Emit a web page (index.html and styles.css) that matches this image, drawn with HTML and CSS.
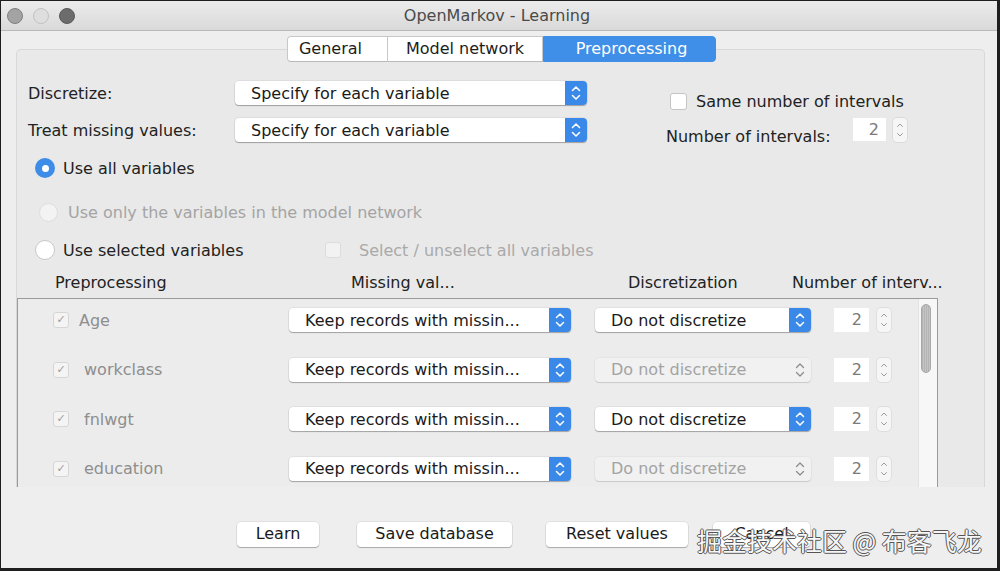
FILE: index.html
```html
<!DOCTYPE html>
<html>
<head>
<meta charset="utf-8">
<link rel="stylesheet" href="styles.css">
</head>
<body>
<div class="window">
  <div class="titlebar">
    <div class="lights">
      <span class="light l1"></span>
      <span class="light l2"></span>
      <span class="light l3"></span>
    </div>
    <div class="title">OpenMarkov - Learning</div>
  </div>
  <div class="content">
    <div class="tabs">
      <div class="tab t-general">General</div>
      <div class="tab t-model">Model network</div>
      <div class="tab t-pre active">Preprocessing</div>
    </div>
    <div class="panel">
      <div class="top">
        <div class="form">
          <div class="label">Discretize:</div>
          <div class="select wide">
            <span class="sel-text">Specify for each variable</span>
            <span class="stepper"><svg width="22" height="24" viewBox="0 0 22 24"><path d="M7.5 9.5 L11 6 L14.5 9.5 M7.5 14.5 L11 18 L14.5 14.5" fill="none" stroke="#fff" stroke-width="1.5" stroke-linecap="round" stroke-linejoin="round"/></svg></span>
          </div>
          <div class="label">Treat missing values:</div>
          <div class="select wide">
            <span class="sel-text">Specify for each variable</span>
            <span class="stepper"><svg width="22" height="24" viewBox="0 0 22 24"><path d="M7.5 9.5 L11 6 L14.5 9.5 M7.5 14.5 L11 18 L14.5 14.5" fill="none" stroke="#fff" stroke-width="1.5" stroke-linecap="round" stroke-linejoin="round"/></svg></span>
          </div>
        </div>
        <div class="intervals">
          <div class="same-row">
            <span class="checkbox"></span>
            <span>Same number of intervals</span>
          </div>
          <div class="num-row">
            <span class="num-label">Number of intervals:</span>
            <span class="numfield">2</span>
            <span class="spin"><svg width="14" height="24" viewBox="0 0 14 24"><path d="M4.5 8.5 L7 6 L9.5 8.5 M4.5 15.5 L7 18 L9.5 15.5" fill="none" stroke="#9a9a9a" stroke-width="1" stroke-linecap="round" stroke-linejoin="round"/></svg></span>
          </div>
        </div>
      </div>

      <div class="radio-row r-all">
        <span class="radio on"></span>
        <span>Use all variables</span>
      </div>
      <div class="radio-row r-only disabled">
        <span class="radio off dis"></span>
        <span>Use only the variables in the model network</span>
      </div>
      <div class="radio-row r-sel">
        <span class="radio off"></span>
        <span class="sel-label">Use selected variables</span>
        <span class="checkbox small dis"></span>
        <span class="dis-text">Select / unselect all variables</span>
      </div>

      <div class="headers">
        <span>Preprocessing</span>
        <span>Missing val...</span>
        <span>Discretization</span>
        <span>Number of interv...</span>
      </div>

      <div class="tablebox">
        <div class="rows">
          <div class="row">
            <span class="cb-dis">&#10003;</span>
            <span class="var">Age</span>
            <div class="select miss">
              <span class="sel-text">Keep records with missin...</span>
              <span class="stepper"><svg width="22" height="24" viewBox="0 0 22 24"><path d="M7.5 9.5 L11 6 L14.5 9.5 M7.5 14.5 L11 18 L14.5 14.5" fill="none" stroke="#fff" stroke-width="1.5" stroke-linecap="round" stroke-linejoin="round"/></svg></span>
            </div>
            <div class="select disc">
              <span class="sel-text">Do not discretize</span>
              <span class="stepper"><svg width="22" height="24" viewBox="0 0 22 24"><path d="M7.5 9.5 L11 6 L14.5 9.5 M7.5 14.5 L11 18 L14.5 14.5" fill="none" stroke="#fff" stroke-width="1.5" stroke-linecap="round" stroke-linejoin="round"/></svg></span>
            </div>
            <span class="numfield sm">2</span>
            <span class="spin"><svg width="14" height="24" viewBox="0 0 14 24"><path d="M4.5 8.5 L7 6 L9.5 8.5 M4.5 15.5 L7 18 L9.5 15.5" fill="none" stroke="#9a9a9a" stroke-width="1" stroke-linecap="round" stroke-linejoin="round"/></svg></span>
          </div>
          <div class="row">
            <span class="cb-dis">&#10003;</span>
            <span class="var ind">workclass</span>
            <div class="select miss">
              <span class="sel-text">Keep records with missin...</span>
              <span class="stepper"><svg width="22" height="24" viewBox="0 0 22 24"><path d="M7.5 9.5 L11 6 L14.5 9.5 M7.5 14.5 L11 18 L14.5 14.5" fill="none" stroke="#fff" stroke-width="1.5" stroke-linecap="round" stroke-linejoin="round"/></svg></span>
            </div>
            <div class="select disc off">
              <span class="sel-text">Do not discretize</span>
              <span class="stepper"><svg width="22" height="24" viewBox="0 0 22 24"><path d="M7.5 9.5 L11 6 L14.5 9.5 M7.5 14.5 L11 18 L14.5 14.5" fill="none" stroke="#8a8a8a" stroke-width="1.2" stroke-linecap="round" stroke-linejoin="round"/></svg></span>
            </div>
            <span class="numfield sm">2</span>
            <span class="spin"><svg width="14" height="24" viewBox="0 0 14 24"><path d="M4.5 8.5 L7 6 L9.5 8.5 M4.5 15.5 L7 18 L9.5 15.5" fill="none" stroke="#9a9a9a" stroke-width="1" stroke-linecap="round" stroke-linejoin="round"/></svg></span>
          </div>
          <div class="row">
            <span class="cb-dis">&#10003;</span>
            <span class="var ind">fnlwgt</span>
            <div class="select miss">
              <span class="sel-text">Keep records with missin...</span>
              <span class="stepper"><svg width="22" height="24" viewBox="0 0 22 24"><path d="M7.5 9.5 L11 6 L14.5 9.5 M7.5 14.5 L11 18 L14.5 14.5" fill="none" stroke="#fff" stroke-width="1.5" stroke-linecap="round" stroke-linejoin="round"/></svg></span>
            </div>
            <div class="select disc">
              <span class="sel-text">Do not discretize</span>
              <span class="stepper"><svg width="22" height="24" viewBox="0 0 22 24"><path d="M7.5 9.5 L11 6 L14.5 9.5 M7.5 14.5 L11 18 L14.5 14.5" fill="none" stroke="#fff" stroke-width="1.5" stroke-linecap="round" stroke-linejoin="round"/></svg></span>
            </div>
            <span class="numfield sm">2</span>
            <span class="spin"><svg width="14" height="24" viewBox="0 0 14 24"><path d="M4.5 8.5 L7 6 L9.5 8.5 M4.5 15.5 L7 18 L9.5 15.5" fill="none" stroke="#9a9a9a" stroke-width="1" stroke-linecap="round" stroke-linejoin="round"/></svg></span>
          </div>
          <div class="row">
            <span class="cb-dis">&#10003;</span>
            <span class="var ind">education</span>
            <div class="select miss">
              <span class="sel-text">Keep records with missin...</span>
              <span class="stepper"><svg width="22" height="24" viewBox="0 0 22 24"><path d="M7.5 9.5 L11 6 L14.5 9.5 M7.5 14.5 L11 18 L14.5 14.5" fill="none" stroke="#fff" stroke-width="1.5" stroke-linecap="round" stroke-linejoin="round"/></svg></span>
            </div>
            <div class="select disc off">
              <span class="sel-text">Do not discretize</span>
              <span class="stepper"><svg width="22" height="24" viewBox="0 0 22 24"><path d="M7.5 9.5 L11 6 L14.5 9.5 M7.5 14.5 L11 18 L14.5 14.5" fill="none" stroke="#8a8a8a" stroke-width="1.2" stroke-linecap="round" stroke-linejoin="round"/></svg></span>
            </div>
            <span class="numfield sm">2</span>
            <span class="spin"><svg width="14" height="24" viewBox="0 0 14 24"><path d="M4.5 8.5 L7 6 L9.5 8.5 M4.5 15.5 L7 18 L9.5 15.5" fill="none" stroke="#9a9a9a" stroke-width="1" stroke-linecap="round" stroke-linejoin="round"/></svg></span>
          </div>
        </div>
        <div class="scrollbar"><div class="thumb"></div></div>
      </div>
    </div>

    <div class="buttons">
      <div class="btn b-learn">Learn</div>
      <div class="btn b-save">Save database</div>
      <div class="btn b-reset">Reset values</div>
      <div class="btn b-cancel">Cancel</div>
    </div>
  </div>
  <div class="watermark">掘金技术社区 @ 布客飞龙</div>
</div>
</body>
</html>
```

FILE: styles.css
```css
* { box-sizing: border-box; }

html, body {
  margin: 0;
  padding: 0;
  background: #1e1e1e;
  width: 1000px;
  height: 571px;
  overflow: hidden;
}

body {
  font-family: "DejaVu Sans", "Noto Sans CJK SC", sans-serif;
  font-size: 16px;
  color: #222;
}

.window {
  position: relative;
  margin: 1px 0 0 1px;
  width: 996px;
  height: 567px;
  background: #eeeeee;
  overflow: hidden;
}

/* title bar */
.titlebar {
  height: 30px;
  display: flex;
  align-items: center;
  background: linear-gradient(#ececec, #d9d9d9);
  border-bottom: 1px solid #b9b9b9;
  position: relative;
}

.lights {
  display: flex;
  gap: 10px;
  padding-left: 6px;
}

.light {
  width: 16px;
  height: 16px;
  border-radius: 50%;
  display: block;
}

.l1 { background: #a3a3a3; border: 1px solid #7f7f7f; }
.l2 { background: #dedede; border: 1px solid #c2c2c2; }
.l3 { background: #6c6c6c; border: 1px solid #5a5a5a; }

.title {
  flex: 1;
  text-align: center;
  color: #4a4a4a;
  margin-left: -80px;
  padding-left: 2px;
}

/* tabs */
.content {
  padding-top: 5px;
}

.tabs {
  display: flex;
  padding-left: 286px;
  position: relative;
  z-index: 2;
}

.tab {
  height: 26px;
  line-height: 24px;
  background: #fff;
  border: 1px solid #c8c8c8;
  border-bottom-color: #b9b9b9;
  text-align: center;
  color: #1d1d1d;
}

.t-general { width: 101px; border-radius: 4px 0 0 4px; padding-right: 14px; }
.t-model { width: 155px; border-left: none; }
.t-pre { width: 173px; border-radius: 0 4px 4px 0; }

.tab.active {
  background: #3f8ee8;
  border-color: #3f8ee8;
  color: #fff;
  padding-left: 4px;
}

/* panel */
.panel {
  margin: -13px 0 0 15px;
  width: 969px;
  height: 438px;
  background: #e9e9e9;
  border: 1px solid #d8d8d8;
  border-bottom: none;
  border-radius: 5px 5px 0 0;
  padding: 31px 0 0 11px;
  overflow: hidden;
  position: relative;
  z-index: 1;
}

.top {
  display: flex;
}

.form {
  display: grid;
  grid-template-columns: 207px 352px;
  row-gap: 13px;
  align-items: center;
}

.label {
  white-space: nowrap;
  padding-top: 1px;
}

.select {
  display: flex;
  align-items: center;
  height: 24px;
  background: #fff;
  border-radius: 4px;
  box-shadow: 0 1px 1px rgba(0, 0, 0, 0.28), 0 0 0 0.5px rgba(0, 0, 0, 0.1);
  color: #1a1a1a;
}

.sel-text {
  flex: 1;
  padding-left: 16px;
  white-space: nowrap;
  overflow: hidden;
}

.stepper {
  width: 22px;
  height: 24px;
  background: #3a89e8;
  border-radius: 0 4px 4px 0;
  display: flex;
}

.select.off {
  background: #f1f1f1;
  color: #a3a3a3;
  box-shadow: 0 1px 1px rgba(0, 0, 0, 0.12), 0 0 0 0.5px rgba(0, 0, 0, 0.06);
}

.select.off .stepper {
  background: transparent;
}

/* intervals block */
.intervals {
  margin-left: 79px;
  padding-top: 10px;
  display: flex;
  flex-direction: column;
}

.same-row {
  display: flex;
  align-items: center;
  height: 20px;
  padding-left: 4px;
  gap: 9px;
}

.checkbox {
  width: 17px;
  height: 17px;
  background: #fff;
  border: 1px solid #c4c4c4;
  border-radius: 3px;
  display: block;
}

.checkbox.small {
  width: 16px;
  height: 16px;
  background: #f2f2f2;
  border-color: #dcdcdc;
}

.num-row {
  display: flex;
  align-items: flex-start;
  margin-top: 7px;
  height: 24px;
}

.num-label {
  width: 187px;
  margin-top: 9px;
  line-height: 20px;
}

.numfield {
  width: 33px;
  height: 23px;
  background: #fff;
  color: #7a7a7a;
  text-align: right;
  padding-right: 7px;
  line-height: 23px;
  display: block;
}

.spin {
  width: 14px;
  height: 24px;
  margin-left: 7px;
  background: #f6f6f6;
  border-radius: 4px;
  box-shadow: 0 0 0 0.5px rgba(0, 0, 0, 0.12);
  display: block;
}

/* radios */
.radio-row {
  display: flex;
  align-items: center;
  height: 20px;
}

.r-all { margin-top: 16px; padding-left: 7px; gap: 8px; }
.r-only { margin-top: 24px; padding-left: 11px; gap: 10px; color: #a4a4a4; }
.r-sel { margin-top: 18px; padding-left: 7px; gap: 8px; }

.radio {
  width: 20px;
  height: 20px;
  border-radius: 50%;
  display: block;
  position: relative;
}

.radio.on {
  background: #3d8ce8;
}

.radio.on::after {
  content: "";
  position: absolute;
  left: 6.5px;
  top: 6.5px;
  width: 7px;
  height: 7px;
  border-radius: 50%;
  background: #fff;
}

.radio.off {
  background: #fff;
  border: 1px solid #c8c8c8;
}

.radio.dis {
  width: 19px;
  height: 19px;
  background: #f3f3f3;
  border-color: #dedede;
}

.sel-label {
  width: 254px;
}

.dis-text {
  color: #a9a9a9;
  margin-left: 10px;
}

/* headers */
.headers {
  display: grid;
  grid-template-columns: 296px 277px 164px auto;
  padding-left: 27px;
  margin-top: 13px;
  height: 20px;
  line-height: 20px;
  white-space: nowrap;
}

/* table */
.tablebox {
  margin: 5px 0 0 -11px;
  width: 921px;
  height: 200px;
  background: #ececec;
  border: 1px solid #9a9a9a;
  border-bottom: none;
  display: flex;
}

.rows {
  flex: 1;
  padding: 9px 0 0 35px;
  display: flex;
  flex-direction: column;
  gap: 25.5px;
}

.row {
  display: grid;
  grid-template-columns: 26px 210px 306px 239px 43px 14px;
  align-items: center;
  height: 24px;
}

.row .spin { margin-left: 0; }

.cb-dis {
  width: 16px;
  height: 16px;
  border: 1px solid #d6d6d6;
  border-radius: 3px;
  background: #f4f4f4;
  color: #9c9c9c;
  font-size: 11px;
  line-height: 14px;
  text-align: center;
  display: block;
}

.var {
  color: #8e8e8e;
}

.var.ind {
  padding-left: 5px;
}

.select.miss { width: 282px; }
.select.disc { width: 216px; }

.numfield.sm {
  width: 35px;
  height: 24px;
  line-height: 24px;
}

.scrollbar {
  width: 19px;
  background: #f7f7f7;
  border-left: 1px solid #e3e3e3;
  padding: 5px 0 0 2px;
}

.thumb {
  width: 10px;
  height: 69px;
  border-radius: 5px;
  background: repeating-linear-gradient(90deg, #b4b4b4 0 1px, #c4c4c4 1px 2px);
  border: 1px solid #a8a8a8;
}

/* buttons */
.buttons {
  display: flex;
  padding-left: 236px;
  margin-top: 35px;
}

.btn {
  height: 25px;
  line-height: 24px;
  background: #fff;
  border-radius: 4px;
  box-shadow: 0 1px 1px rgba(0, 0, 0, 0.25), 0 0 0 0.5px rgba(0, 0, 0, 0.12);
  text-align: center;
  color: #1a1a1a;
}

.b-learn { width: 82px; margin-right: 38px; }
.b-save { width: 155px; margin-right: 34px; }
.b-reset { width: 142px; margin-right: 25px; }
.b-cancel { width: 97px; }

.watermark {
  position: absolute;
  left: 696px;
  top: 524px;
  font-family: "Noto Sans CJK SC", sans-serif;
  font-size: 25px;
  line-height: 30px;
  color: #f7f7f7;
  white-space: nowrap;
  text-shadow: 1px 0 0 #555, -1px 0 0 #555, 0 1px 0 #555, 0 -1px 0 #555;
}
```
